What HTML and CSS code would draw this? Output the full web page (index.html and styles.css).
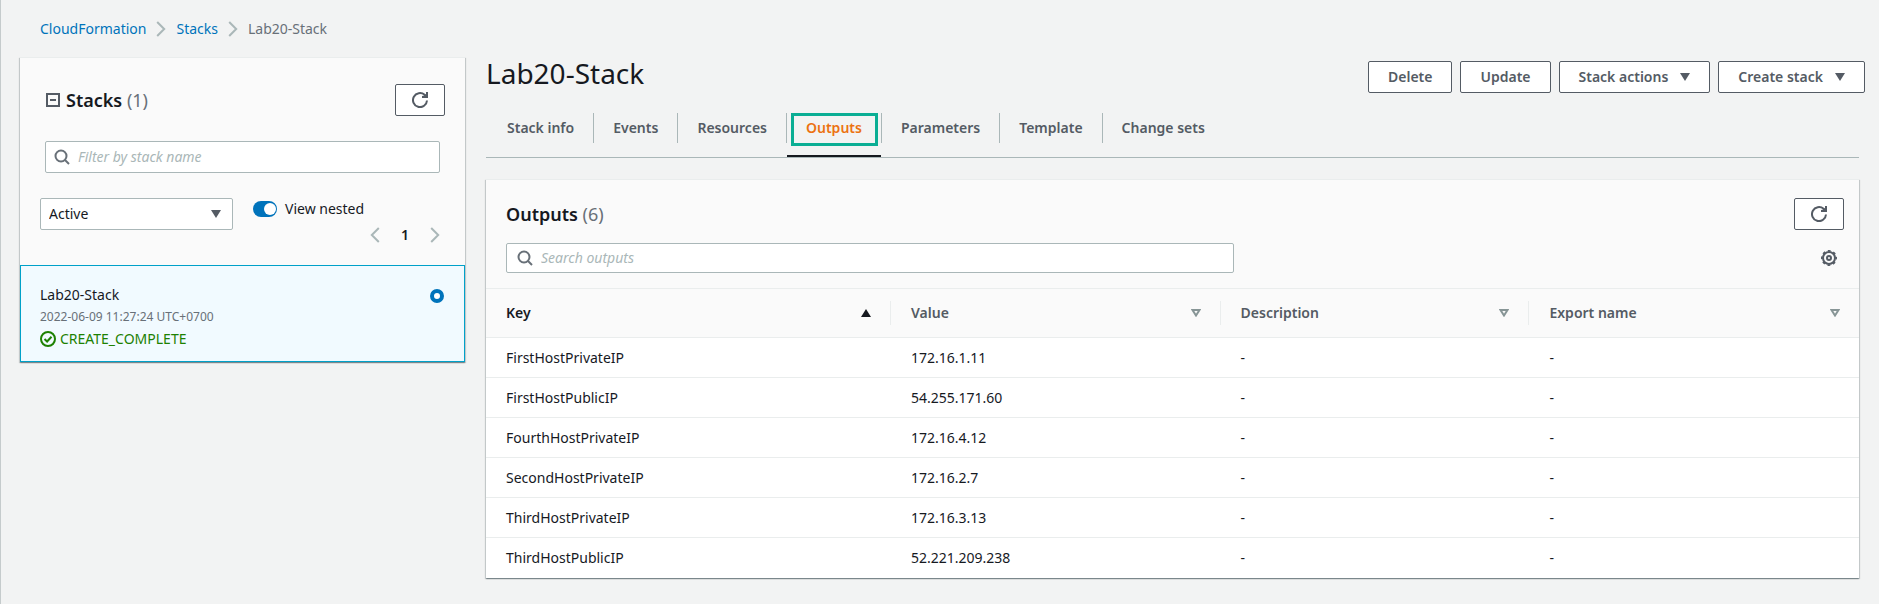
FILE: index.html
```html
<!DOCTYPE html>
<html lang="en">
<head>
<meta charset="utf-8">
<title>CloudFormation - Stack Lab20-Stack</title>
<link rel="stylesheet" href="styles.css">
</head>
<body>
<svg class="defs" aria-hidden="true">
  <symbol id="refresh" viewBox="0 0 16 16"><path d="M15 8.500A7 7 0 1 1 12.600 2.800L14.500 4.600" fill="none" stroke="currentColor" stroke-width="2"/><path d="M16 0v6h-6V4l2.500-.5L14 2V0z" fill="currentColor"/></symbol>
  <symbol id="search" viewBox="0 0 16 16"><circle cx="7" cy="7" r="5.500" fill="none" stroke="currentColor" stroke-width="2"/><path d="M11 11l4 4" fill="none" stroke="currentColor" stroke-width="2"/></symbol>
  <symbol id="next" viewBox="0 0 10 16"><path d="M1.200 1l7 7-7 7" fill="none" stroke="currentColor" stroke-width="2"/></symbol>
  <symbol id="prev" viewBox="0 0 10 16"><path d="M8.800 1l-7 7 7 7" fill="none" stroke="currentColor" stroke-width="2"/></symbol>
  <symbol id="down" viewBox="0 0 10 8"><path d="M0 0h10L5 8z" fill="currentColor"/></symbol>
  <symbol id="up" viewBox="0 0 10 8"><path d="M0 8h10L5 0z" fill="currentColor"/></symbol>
  <symbol id="sort" viewBox="0 0 10 8"><path d="M1.500 1h7L5 6.500z" fill="none" stroke="currentColor" stroke-width="2"/></symbol>
</svg>
<div class="app">
  <nav class="breadcrumbs" aria-label="Breadcrumbs">
    <a href="#">CloudFormation</a>
    <svg class="chevron"><use href="#next"/></svg>
    <a href="#">Stacks</a>
    <svg class="chevron"><use href="#next"/></svg>
    <span>Lab20-Stack</span>
  </nav>
  <div class="layout">
    <aside class="panel sidebar">
      <div class="side-head">
        <button class="collapse" aria-label="Collapse stacks"><svg viewBox="0 0 14 14"><path d="M1 1h12v12H1zM4 7h6" fill="none" stroke="currentColor" stroke-width="2"/></svg></button>
        <h2>Stacks <span class="count">(1)</span></h2>
        <button class="btn icon-btn" aria-label="Refresh stacks"><svg class="icon"><use href="#refresh"/></svg></button>
      </div>
      <label class="search side-search">
        <svg class="icon"><use href="#search"/></svg>
        <input type="text" placeholder="Filter by stack name" aria-label="Filter by stack name">
      </label>
      <div class="filters">
        <div class="select">
          <select aria-label="Stack status"><option>Active</option></select>
          <svg class="caret"><use href="#down"/></svg>
        </div>
        <label class="toggle"><input type="checkbox" checked>View nested</label>
        <div class="pager">
          <button aria-label="Previous page"><svg class="chevron"><use href="#prev"/></svg></button>
          <button class="page">1</button>
          <button aria-label="Next page"><svg class="chevron"><use href="#next"/></svg></button>
        </div>
      </div>
      <label class="stack">
        <span class="stack-info">
          <span>Lab20-Stack</span>
          <span class="date">2022-06-09 11:27:24 UTC+0700</span>
          <span class="status"><svg class="icon" viewBox="0 0 16 16"><circle cx="8" cy="8" r="7" fill="none" stroke="currentColor" stroke-width="2"/><path d="M4.500 8l2.600 2.500 4.400-4.700" fill="none" stroke="currentColor" stroke-width="2"/></svg>CREATE_COMPLETE</span>
        </span>
        <input type="radio" name="stack" checked>
      </label>
    </aside>
    <main>
      <header class="title-row">
        <h1>Lab20-Stack</h1>
        <div class="actions">
          <button class="btn">Delete</button>
          <button class="btn">Update</button>
          <button class="btn">Stack actions <svg class="caret"><use href="#down"/></svg></button>
          <button class="btn">Create stack <svg class="caret"><use href="#down"/></svg></button>
        </div>
      </header>
      <div class="tabs" role="tablist">
        <button role="tab">Stack info</button>
        <button role="tab">Events</button>
        <button role="tab">Resources</button>
        <button role="tab" class="active" aria-selected="true">Outputs</button>
        <button role="tab">Parameters</button>
        <button role="tab">Template</button>
        <button role="tab">Change sets</button>
      </div>
      <section class="panel">
        <div class="out-head">
          <h2>Outputs <span class="count">(6)</span></h2>
          <button class="btn icon-btn" aria-label="Refresh outputs"><svg class="icon"><use href="#refresh"/></svg></button>
        </div>
        <div class="out-tools">
          <label class="search">
            <svg class="icon"><use href="#search"/></svg>
            <input type="text" placeholder="Search outputs" aria-label="Search outputs">
          </label>
          <button class="gear" aria-label="Preferences"><svg class="icon" viewBox="0 0 16 16"><circle cx="8" cy="8" r="6" fill="none" stroke="currentColor" stroke-width="2"/><circle cx="8" cy="8" r="7.200" fill="none" stroke="currentColor" stroke-width="1.600" stroke-dasharray="2.830 2.824" stroke-dashoffset="1.400"/><circle cx="8" cy="8" r="2" fill="none" stroke="currentColor" stroke-width="2"/></svg></button>
        </div>
        <table>
          <thead>
            <tr>
              <th class="key sorted"><div>Key <svg class="caret"><use href="#up"/></svg></div></th>
              <th class="value"><div>Value <svg class="caret"><use href="#sort"/></svg></div></th>
              <th class="desc"><div>Description <svg class="caret"><use href="#sort"/></svg></div></th>
              <th><div>Export name <svg class="caret"><use href="#sort"/></svg></div></th>
            </tr>
          </thead>
          <tbody>
            <tr><td>FirstHostPrivateIP</td><td>172.16.1.11</td><td>-</td><td>-</td></tr>
            <tr><td>FirstHostPublicIP</td><td>54.255.171.60</td><td>-</td><td>-</td></tr>
            <tr><td>FourthHostPrivateIP</td><td>172.16.4.12</td><td>-</td><td>-</td></tr>
            <tr><td>SecondHostPrivateIP</td><td>172.16.2.7</td><td>-</td><td>-</td></tr>
            <tr><td>ThirdHostPrivateIP</td><td>172.16.3.13</td><td>-</td><td>-</td></tr>
            <tr><td>ThirdHostPublicIP</td><td>52.221.209.238</td><td>-</td><td>-</td></tr>
          </tbody>
        </table>
      </section>
    </main>
  </div>
</div>
</body>
</html>
```
FILE: styles.css
```css
* { box-sizing: border-box; }
body {
  margin: 0;
  background: #f2f3f3;
  color: #16191f;
  font: 14px/22px "Noto Sans", "Open Sans", sans-serif;
}
button, input, select { font: inherit; color: inherit; }
button { padding: 0; border: 0; background: none; cursor: pointer; }
svg { display: block; flex: none; }
.defs { position: absolute; width: 0; height: 0; }
.icon { width: 16px; height: 16px; }
.chevron { width: 10px; height: 16px; color: #aab7b8; }
.caret { width: 10px; height: 8px; }
h1, h2 { margin: 0; }
h1 { font-size: 28px; line-height: 32px; font-weight: 400; }
h2 { font-size: 18px; line-height: 22px; font-weight: 600; }
.count { font-weight: 400; color: #687078; }

.app { min-height: 100vh; padding: 18px 14px 24px 19px; border-left: 1px solid #c5cbcc; }
.breadcrumbs { display: flex; align-items: center; gap: 10px; padding-left: 20px; color: #687078; }
.breadcrumbs a { color: #0073bb; text-decoration: none; }
.layout { display: flex; align-items: flex-start; gap: 21px; margin-top: 17px; }

.panel {
  background: #fafafa;
  border-top: 1px solid #eaeded;
  box-shadow: 0 1px 1px 0 rgba(0, 28, 36, .3), 1px 1px 1px 0 rgba(0, 28, 36, .15), -1px 1px 1px 0 rgba(0, 28, 36, .15);
}
.sidebar { flex: 0 0 445px; }

.btn {
  display: flex;
  align-items: center;
  gap: 12px;
  height: 32px;
  padding: 0 19px;
  border: 1px solid #545b64;
  border-radius: 2px;
  background: #fff;
  color: #545b64;
  font-weight: 600;
  white-space: nowrap;
}
.icon-btn { width: 50px; justify-content: center; padding: 0; }

.search {
  display: flex;
  align-items: center;
  gap: 8px;
  height: 32px;
  padding: 0 8px;
  border: 1px solid #aab7b8;
  border-radius: 2px;
  background: #fff;
  color: #687078;
}
.search input { flex: 1; min-width: 0; padding: 0; border: 0; outline: 0; background: none; color: #16191f; }
.search input::placeholder { color: #aab7b8; font-style: italic; opacity: 1; }

.side-head { display: flex; align-items: center; gap: 6px; padding: 26px 20px 0 26px; }
.side-head .icon-btn { margin-left: auto; }
.collapse { color: #545b64; }
.collapse svg { width: 14px; height: 14px; }
.side-search { margin: 25px 25px 0; }
.filters { display: grid; grid-template-columns: 193px 1fr; gap: 4px 20px; align-items: start; padding: 25px 20px 19px; }
.select { display: grid; align-items: center; grid-row: 1 / 3; }
.select > * { grid-area: 1 / 1; }
.select select {
  appearance: none;
  height: 32px;
  padding: 0 8px;
  border: 1px solid #aab7b8;
  border-radius: 2px;
  background: #fff;
}
.select .caret { justify-self: end; margin-right: 12px; color: #545b64; pointer-events: none; }
.toggle { display: flex; align-items: center; gap: 8px; }
.toggle input {
  appearance: none;
  display: flex;
  justify-content: flex-end;
  width: 24px;
  height: 16px;
  margin: 0;
  padding: 2px 1px;
  border-radius: 8px;
  background: #0073bb;
}
.toggle input::before { content: ""; width: 12px; height: 12px; border-radius: 50%; background: #fff; }
.pager { display: flex; justify-content: flex-end; align-items: center; gap: 21px; padding-right: 5px; }
.page { font-weight: 600; }

.stack { display: flex; justify-content: space-between; padding: 18px 20px 11px 19px; border: 1px solid #00a1c9; background: #f1faff; }
.stack-info { display: flex; flex-direction: column; }
.date { font-size: 12px; color: #687078; }
.status { display: flex; align-items: center; gap: 4px; color: #1d8102; }
.stack input { appearance: none; width: 14px; height: 14px; margin: 5px 0 0; border: 4px solid #0073bb; border-radius: 50%; background: #fff; }

main { flex: 1; min-width: 0; }
.title-row { display: flex; justify-content: space-between; align-items: flex-start; }
.actions { display: flex; gap: 8px; padding-top: 4px; }
.tabs { display: flex; margin: 20px 6px 21px 0; padding: 0 0 14px 2px; border-bottom: 1px solid #aab7b8; }
.tabs button { position: relative; height: 30px; padding: 0 19px; border-right: 1px solid #aab7b8; color: #545b64; font-weight: 600; }
.tabs button:last-child { border: 0; }
.tabs .active { color: #ec7211; }
.tabs .active::before { content: ""; position: absolute; left: 0; right: 0; bottom: -14px; height: 2px; background: #16191f; }
.tabs .active::after { content: ""; position: absolute; inset: 0 3px -3px 4px; border: 3px solid #0aae94; }

main .panel { margin-right: 6px; }
.out-head { display: flex; justify-content: space-between; align-items: center; padding: 18px 15px 0 20px; }
.out-tools { display: flex; justify-content: space-between; align-items: center; padding: 13px 22px 15px 20px; }
.out-tools .search { flex: 0 1 728px; height: 30px; padding: 0 10px; }
.gear { color: #545b64; }

table { width: 100%; border-collapse: collapse; table-layout: fixed; background: #fff; }
th, td { padding: 0 20px; border-top: 1px solid #eaeded; text-align: left; }
th { height: 49px; padding-right: 0; background: #fafafa; color: #545b64; font-weight: 600; }
th div { display: flex; justify-content: space-between; align-items: center; height: 24px; padding-right: 19px; border-right: 1px solid #eaeded; }
th:last-child div { border: 0; }
th .caret { color: #879596; }
.sorted, .sorted .caret { color: #16191f; }
td { height: 40px; }
.key { width: 29.500%; }
.value { width: 24%; }
.desc { width: 22.500%; }
```
